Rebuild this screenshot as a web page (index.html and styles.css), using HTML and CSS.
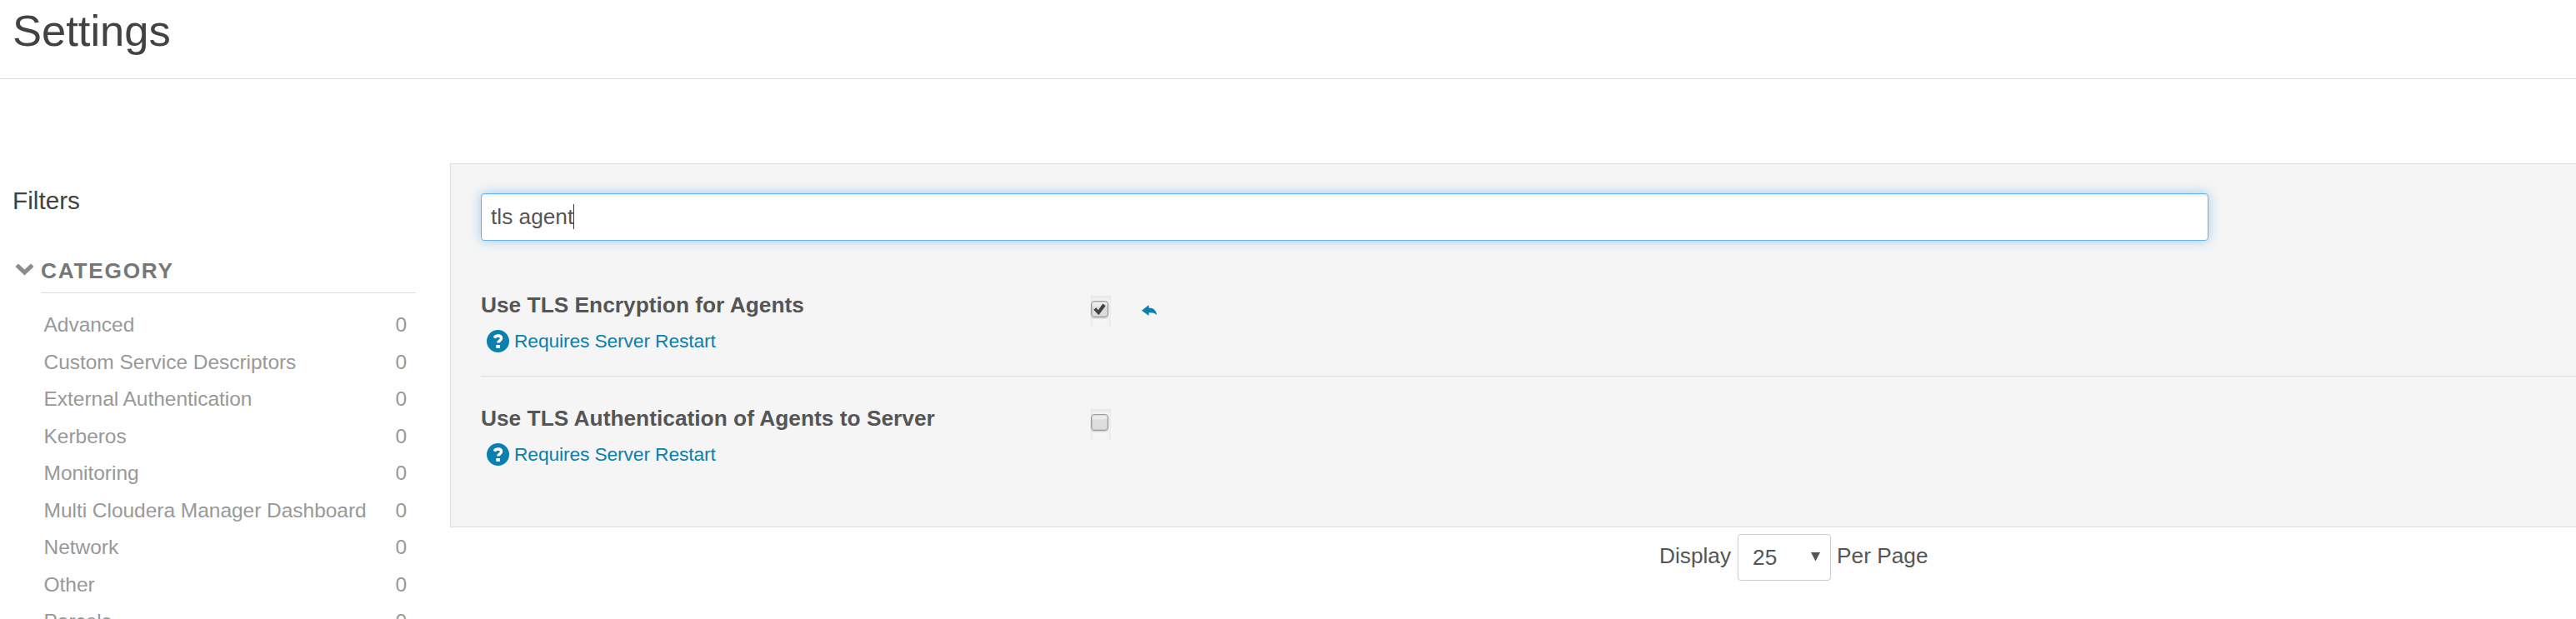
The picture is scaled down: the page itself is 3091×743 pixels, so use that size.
FILE: index.html
```html
<!DOCTYPE html>
<html lang="en">
<head>
<meta charset="utf-8">
<title>Settings</title>
<link rel="stylesheet" href="styles.css">
</head>
<body>
<header class="page-header"><h1 class="page-title">Settings</h1></header>
<div class="layout">
  <aside class="sidebar">
    <h2 class="sidebar-title">Filters</h2>
    <section class="facet">
      <svg class="chevron" viewBox="0 0 23 15" width="23" height="15"><path d="M.4 4 4 .6l7.500 7L19 .6 22.600 4 11.500 14.600Z" fill="#8c8c8c"/></svg>
      <div class="facet-body">
        <h3 class="facet-title">CATEGORY</h3>
        <ul class="facet-list">
          <li><span>Advanced</span><span>0</span></li>
          <li><span>Custom Service Descriptors</span><span>0</span></li>
          <li><span>External Authentication</span><span>0</span></li>
          <li><span>Kerberos</span><span>0</span></li>
          <li><span>Monitoring</span><span>0</span></li>
          <li><span>Multi Cloudera Manager Dashboard</span><span>0</span></li>
          <li><span>Network</span><span>0</span></li>
          <li><span>Other</span><span>0</span></li>
          <li><span>Parcels</span><span>0</span></li>
        </ul>
      </div>
    </section>
  </aside>
  <main class="content">
    <div class="panel">
      <div class="search"><span>tls agent</span><span class="caret"></span></div>
      <div class="setting">
        <div class="setting-label">
          <div class="setting-name">Use TLS Encryption for Agents</div>
          <a class="restart">
            <svg width="27" height="27" viewBox="0 0 27 27"><circle cx="13.500" cy="13.500" r="13.500" fill="#0b7fad"/><path d="M9.300 9.700c.8-1.900 2.300-2.700 4.300-2.700 2.500 0 4 1.200 4 3.200 0 2.900-3.900 2.600-3.900 5.400" fill="none" stroke="#fff" stroke-width="3.400"/><path d="M11.300 18h4.600v3.900h-4.600z" fill="#fff"/></svg>
            <span>Requires Server Restart</span>
          </a>
        </div>
        <div class="check"><span class="box"><svg width="15" height="15" viewBox="0 0 15 15"><path d="M.3 7.700 3.300 5.200 5.800 8.200 11.300.4 14.700 2.900 6.400 14.300Z" fill="#424242"/></svg></span></div>
        <svg class="undo" width="18" height="14" viewBox="0 0 18 14"><path d="M0 6.700 8.500 0v3.500C14 3.500 17.600 6.600 18 12.300 15.500 9.600 12.500 9.200 8.500 9.400V13Z" fill="#0b7fad"/></svg>
      </div>
      <div class="setting">
        <div class="setting-label">
          <div class="setting-name">Use TLS Authentication of Agents to Server</div>
          <a class="restart">
            <svg width="27" height="27" viewBox="0 0 27 27"><circle cx="13.500" cy="13.500" r="13.500" fill="#0b7fad"/><path d="M9.300 9.700c.8-1.900 2.300-2.700 4.300-2.700 2.500 0 4 1.200 4 3.200 0 2.900-3.900 2.600-3.900 5.400" fill="none" stroke="#fff" stroke-width="3.400"/><path d="M11.300 18h4.600v3.900h-4.600z" fill="#fff"/></svg>
            <span>Requires Server Restart</span>
          </a>
        </div>
        <div class="check"><span class="box"></span></div>
      </div>
    </div>
    <div class="pager">
      <span>Display</span>
      <div class="select"><span>25</span><svg width="11" height="11" viewBox="0 0 11 11"><path d="M0 0h11L5.500 10.600Z" fill="#555"/></svg></div>
      <span>Per Page</span>
    </div>
  </main>
</div>
</body>
</html>
```

FILE: styles.css
```css
* { box-sizing: border-box; }
html { overflow: hidden; }
body {
  margin: 0;
  height: 743px;
  overflow: hidden;
  background: #fefefe;
  color: #555;
  font: 26.25px/38px "Liberation Sans", Arial, sans-serif;
}
h1, h2, h3, ul { margin: 0; padding: 0; font-weight: normal; }
svg { display: block; flex: none; }
.page-header {
  height: 95px;
  padding: 7px 0 0 15px;
  border-bottom: 1px solid #ddd;
}
.page-title { font-size: 52.5px; line-height: 60px; color: #424242; }
.layout { display: flex; padding-top: 101px; }
.sidebar { width: 540px; flex: none; padding: 26px 41px 0 15px; }
.sidebar-title { font-size: 29.75px; color: #424242; }
.facet { display: flex; gap: 8px; margin-top: 46px; padding-left: 3px; }
.chevron { margin-top: 10px; }
.facet-body { flex: 1; }
.facet-title {
  padding-bottom: 7px;
  border-bottom: 1px solid #ddd;
  font-size: 26.25px;
  font-weight: bold;
  letter-spacing: 1.75px;
  color: #777;
}
.facet-list {
  list-style: none;
  padding: 16px 11px 0 3.5px;
  font-size: 24.5px;
  line-height: 44.5px;
  letter-spacing: -.03px;
  color: #999;
}
.facet-list li { display: flex; justify-content: space-between; }
.content { flex: 1; min-width: 0; }
.panel {
  height: 437px;
  padding: 35px 0 0 36px;
  border: 1px solid #ddd;
  border-right: 0;
  background: #f5f5f5;
}
.search {
  display: flex;
  align-items: center;
  width: 2073px;
  height: 57px;
  padding: 0 11px 2px;
  border: 1px solid #66b3ee;
  border-radius: 4px;
  background: #fff;
  box-shadow: inset 0 2px 2px rgba(0, 0, 0, .075), 0 0 14px rgba(102, 175, 233, .6);
}
.caret { width: 1px; height: 30px; background: #333; }
.setting { display: flex; height: 136px; padding-top: 31px; }
.setting:nth-child(2) { height: 163px; padding-top: 58px; border-bottom: 1px solid #ddd; }
.setting-label { width: 732px; }
.setting-name { font-weight: bold; letter-spacing: .03px; }
.restart {
  display: flex;
  align-items: center;
  gap: 6px;
  height: 44px;
  margin-top: 2px;
  padding: 0 0 0 7px;
  color: #0b7fad;
  font-size: 22.75px;
  letter-spacing: -.1px;
}
.check {
  width: 24px;
  height: 37px;
  margin-top: 8px;
  padding-top: 6px;
  box-shadow: inset 0 2px 5px rgba(0, 0, 0, .08);
}
.box {
  display: flex;
  width: 21px;
  height: 20px;
  padding: 2px 0 0 2px;
  border: 1px solid #a0a0a0;
  border-radius: 4px;
  background: linear-gradient(#ededed 20%, #dcdcdc 40%, #dedede);
  box-shadow: 0 1px 2px rgba(0, 0, 0, .2), inset 0 0 0 1px rgba(0, 0, 0, .1);
}
.undo { margin: 19px 0 0 37px; }
.pager { display: flex; padding: 8px 0 0 1451px; line-height: 52px; }
.select {
  display: flex;
  justify-content: space-between;
  align-items: center;
  width: 112px;
  height: 56px;
  margin: 0 7px 0 8px;
  padding: 0 12px 1px 17px;
  border: 1px solid #ccc;
  border-radius: 4px;
  background: #fff;
}
```
